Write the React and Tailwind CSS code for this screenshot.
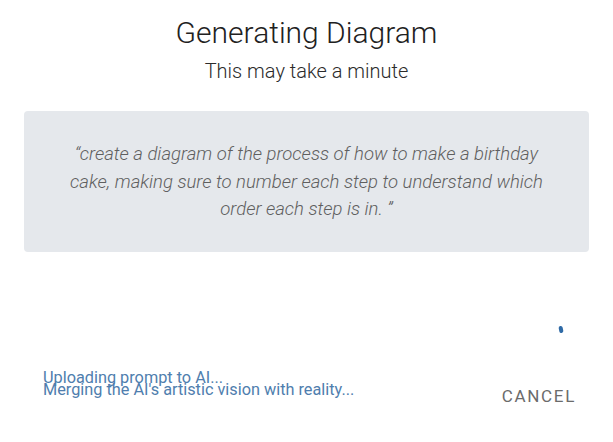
import React from "react";

const steps = ["Uploading prompt to AI...", "Merging the AI's artistic vision with reality..."];

function App() {
  return (
    <div className="flex h-[442px] w-full flex-col bg-white font-['Roboto',sans-serif]">
      <div className="flex flex-col items-center pt-[15px]">
        <h1 className="text-[30px] leading-[36px] font-light text-[#212121]">
          Generating Diagram
        </h1>
        <p className="mt-2 text-[20px] leading-[24px] font-light text-[#2b2b2b]">
          This may take a minute
        </p>
      </div>

      <div className="mx-6 mt-[28px] h-[141px] rounded bg-[#e5e8ec] px-[40px] pt-[30px]">
        <p className="text-center text-[18.5px] leading-[27.5px] font-light italic text-[#5f5f5f]">
          “create a diagram of the process of how to make a birthday cake, making sure to number each step to understand which order each step is in. ”
        </p>
      </div>

      <div className="mt-[74px] flex justify-end pr-[50px]">
        <span className="block h-[7px] w-[4px] rotate-[-12deg] rounded-full bg-[#2f6aa6]" />
      </div>

      <div className="mt-[39px] flex items-start justify-between pl-[43px] pr-[37px]">
        <div className="flex flex-col">
          {steps.map((step) => (
            <span key={step} className="text-[16.3px] leading-[12px] text-[#4f7eae]">
              {step}
            </span>
          ))}
        </div>
        <button className="mt-[12px] text-[17px] leading-[24px] tracking-[0.1em] text-[#6b6b6b] uppercase">
          Cancel
        </button>
      </div>
    </div>
  );
}

export default App;
